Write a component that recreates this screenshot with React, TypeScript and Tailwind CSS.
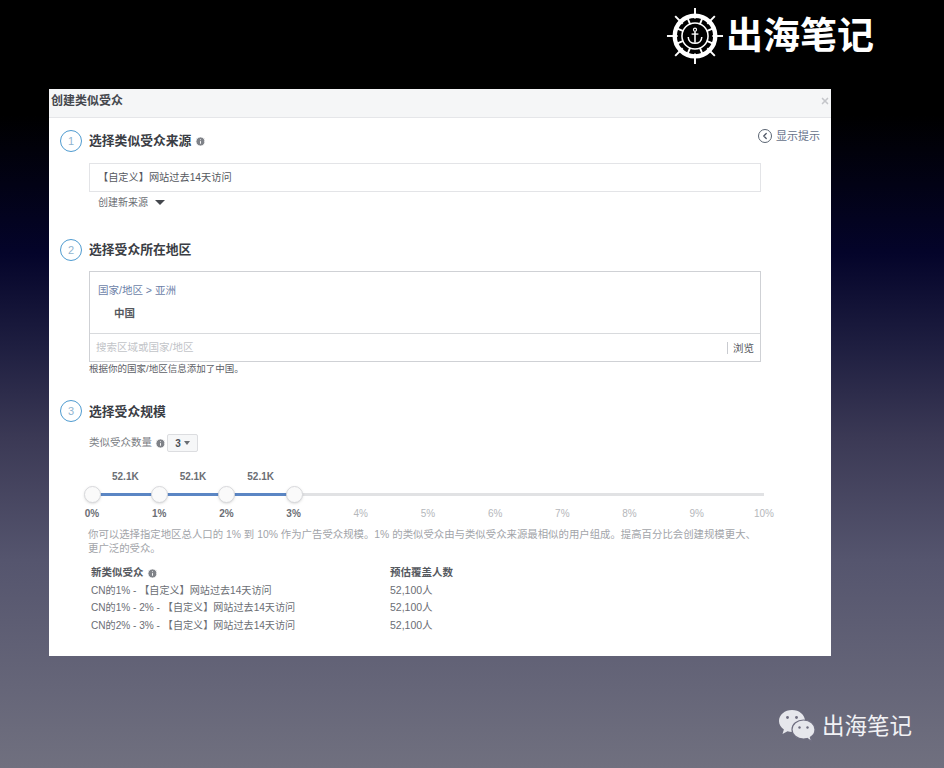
import { Info, ChevronLeft, X } from "lucide-react";

const cjk = "font-['Liberation_Sans','Noto_Sans_CJK_SC',sans-serif]";

function HelmLogo() {
  const spokes = [0, 45, 90, 135, 180, 225, 270, 315];
  return (
    <svg width="58" height="58" viewBox="0 0 60 60" fill="none" stroke="white">
      {spokes.map((a) => (
        <line key={a} x1="30" y1="1" x2="30" y2="12" strokeWidth="2" transform={`rotate(${a} 30 30)`} />
      ))}
      <circle cx="30" cy="30" r="21" strokeWidth="4.5" />
      <circle cx="30" cy="30" r="13.5" strokeWidth="1.6" />
      {spokes.map((a) => (
        <line key={a} x1="30" y1="9" x2="30" y2="17" strokeWidth="2" transform={`rotate(${a + 22.5} 30 30)`} />
      ))}
      <circle cx="30" cy="23.5" r="1.6" strokeWidth="1.2" />
      <line x1="30" y1="25" x2="30" y2="37" strokeWidth="1.6" />
      <line x1="26.5" y1="28" x2="33.5" y2="28" strokeWidth="1.4" />
      <path d="M23 31c0 4 3 6.5 7 6.5s7-2.500 7-6.500" strokeWidth="1.6" />
    </svg>
  );
}

function WeChatLogo() {
  return (
    <svg width="38" height="36" viewBox="0 0 38 36">
      <path d="M14 1C6.800 1 1 5.900 1 12c0 3.500 1.900 6.500 4.900 8.500L4.500 25l5-2.700c1.400.4 2.900.7 4.500.7 7.200 0 13-4.900 13-11S21.200 1 14 1z" fill="#e6e7ec" />
      <path d="M25.500 11C19.100 11 14 15.200 14 20.500S19.100 30 25.500 30c1.300 0 2.500-.2 3.700-.5l4.300 2.900-1.100-4.200c3-1.700 4.600-4.500 4.600-7.700C37 15.200 31.900 11 25.500 11z" fill="#e6e7ec" stroke="#6f6e80" strokeWidth="1.200" />
      <circle cx="9.500" cy="8.500" r="1.400" fill="#6f6e80" />
      <circle cx="18.500" cy="8.500" r="1.400" fill="#6f6e80" />
      <circle cx="21.500" cy="18.500" r="1.200" fill="#6f6e80" />
      <circle cx="29.500" cy="18.500" r="1.200" fill="#6f6e80" />
    </svg>
  );
}

function StepHeading({ n, title, info }: { n: number; title: string; info?: boolean }) {
  return (
    <div className="flex items-center">
      <div className="ml-[1px] flex h-[22px] w-[22px] items-center justify-center rounded-full border-[1.5px] border-[#4f9bd0] text-[11px] text-[#8fb4d0]">
        {n}
      </div>
      <div className="ml-[7px] text-[12.800px] font-bold text-[#3a3d44]">{title}</div>
      {info && <Info className="ml-[4px] h-[11px] w-[11px] fill-[#7f8288] text-white" />}
    </div>
  );
}

const pcts = ["0%", "1%", "2%", "3%", "4%", "5%", "6%", "7%", "8%", "9%", "10%"];

function Slider() {
  return (
    <div className="ml-[33px] mt-[17px] w-[672px]">
      <div className="flex justify-between pl-[20px] pr-[490px] text-[10px] font-bold text-[#6b6e74]">
        <span>52.1K</span>
        <span>52.1K</span>
        <span>52.1K</span>
      </div>
      <div className="relative mt-[9px] h-[3px] bg-[#e1e2e4]">
        <div className="h-full w-[30%] bg-[#5b86c4]" />
        {[0, 1, 2, 3].map((i) => (
          <div
            key={i}
            className="absolute top-[-7px] ml-[-8px] h-[17px] w-[17px] rounded-full border border-[#d8d9dc] bg-[#fafafa] shadow-sm"
            style={{ left: `${i * 10}%` }}
          />
        ))}
      </div>
      <div className="mt-[10px] flex justify-between text-[10px]">
        {pcts.map((p, i) => (
          <span key={p} className={`flex w-0 justify-center ${i <= 3 ? "font-bold text-[#6b6e74]" : "text-[#b5b7bb]"}`}>
            {p}
          </span>
        ))}
      </div>
    </div>
  );
}

const rows = [
  "CN的1% - 【自定义】网站过去14天访问",
  "CN的1% - 2% - 【自定义】网站过去14天访问",
  "CN的2% - 3% - 【自定义】网站过去14天访问",
];

export default function App() {
  return (
    <div className={`flex h-[768px] w-[944px] flex-col overflow-hidden bg-[linear-gradient(to_bottom,#000_15%,#04042a_33%,#1e1e40_45%,#3b3955_57%,#55556e_73%,#70707f_100%)] ${cjk}`}>
      <div className="flex h-[89px] items-start pl-[666px] pt-[7px]">
        <HelmLogo />
        <span className="ml-[2px] mt-[6px] text-[37px] font-bold leading-[48px] text-white">出海笔记</span>
      </div>

      <div className="ml-[49px] flex h-[567px] w-[782px] flex-col bg-white">
        <div className="flex h-[29px] items-center justify-between border-b border-[#e5e6e9] bg-[#f5f6f7] pb-[4px] pl-[2px] pr-[1px]">
          <span className="text-[12px] font-bold text-[#44474d]">创建类似受众</span>
          <X className="h-[10px] w-[10px] text-[#c4c6ca]" strokeWidth={4} />
        </div>

        <div className="flex flex-1 flex-col pl-[10px] pt-[12px]">
          <div className="flex items-start justify-between pr-[11px]">
            <StepHeading n={1} title="选择类似受众来源" info />
            <div className="mt-[-2px] flex items-center gap-[4px] text-[11px] text-[#66718a]">
              <span className="flex h-[14px] w-[14px] items-center justify-center rounded-full border border-[#5a6472]">
                <ChevronLeft className="h-[10px] w-[10px] text-[#4e5665]" strokeWidth={3} />
              </span>
              显示提示
            </div>
          </div>

          <div className="ml-[30px] mt-[11px] flex h-[29px] w-[672px] items-center border border-[#e3e4e7] pl-[8px] text-[10.200px] text-[#55585e]">
            【自定义】网站过去14天访问
          </div>
          <div className="ml-[39px] mt-[3px] flex items-center text-[10px] text-[#6a6d73]">
            创建新来源
            <span className="ml-[7px] h-0 w-0 border-x-[5px] border-t-[5px] border-x-transparent border-t-[#44474d]" />
          </div>

          <div className="mt-[29px]">
            <StepHeading n={2} title="选择受众所在地区" />
          </div>

          <div className="ml-[30px] mt-[10px] w-[672px] border border-[#cfd1d5]">
            <div className="h-[62px] border-b border-[#d8dadd] pl-[8px] pt-[11px]">
              <div className="text-[10.500px] text-[#6d7fa8]">国家/地区 &gt; 亚洲</div>
              <div className="ml-[16px] mt-[7px] text-[10.500px] font-bold text-[#55585e]">中国</div>
            </div>
            <div className="flex h-[27px] items-center justify-between pl-[6px] pr-[6px] text-[10.500px]">
              <span className="text-[#c2c4c8]">搜索区域或国家/地区</span>
              <span className="border-l border-[#c9cbd0] pl-[5px] leading-[12px] text-[#55585e]">浏览</span>
            </div>
          </div>
          <div className="ml-[30px] text-[9.500px] text-[#5d6066]">根据你的国家/地区信息添加了中国。</div>

          <div className="mt-[24px]">
            <StepHeading n={3} title="选择受众规模" />
          </div>

          <div className="ml-[30px] mt-[12px] flex items-center text-[10.500px] text-[#7a7d83]">
            类似受众数量
            <Info className="ml-[3px] mr-[1px] h-[11px] w-[11px] fill-[#7f8288] text-white" />
            <div className="flex h-[18px] w-[31px] items-center justify-center gap-[3px] rounded-[2px] border border-[#dcdde0] bg-[#f6f7f8] text-[10px] font-bold text-[#4b4f56]">
              3
              <span className="h-0 w-0 border-x-[3.500px] border-t-[4px] border-x-transparent border-t-[#6a6d73]" />
            </div>
          </div>

          <Slider />

          <div className="ml-[29px] mt-[7px] w-[675px] text-[10.400px] leading-[14px] text-[#a2a4a9]">
            你可以选择指定地区总人口的 1% 到 10% 作为广告受众规模。1% 的类似受众由与类似受众来源最相似的用户组成。提高百分比会创建规模更大、更广泛的受众。
          </div>

          <div className="ml-[32px] mt-[8px] grid w-[400px] grid-cols-[299px_1fr] text-[10.100px] leading-[17.500px] text-[#6b6e74]">
            <div className="flex items-center text-[10.500px] font-bold text-[#55585e]">
              新类似受众
              <Info className="ml-[3px] h-[11px] w-[11px] fill-[#7f8288] text-white" />
            </div>
            <div className="text-[10.500px] font-bold text-[#55585e]">预估覆盖人数</div>
            {rows.map((r) => (
              <div key={r} className="contents">
                <div>{r}</div>
                <div className="text-[10.500px]">52,100人</div>
              </div>
            ))}
          </div>
        </div>
      </div>

      <div className="flex items-start pl-[778px] pt-[53px]">
        <WeChatLogo />
        <span className="ml-[6px] text-[22.500px] leading-[36px] text-[#f1f1f4]">出海笔记</span>
      </div>
    </div>
  );
}
